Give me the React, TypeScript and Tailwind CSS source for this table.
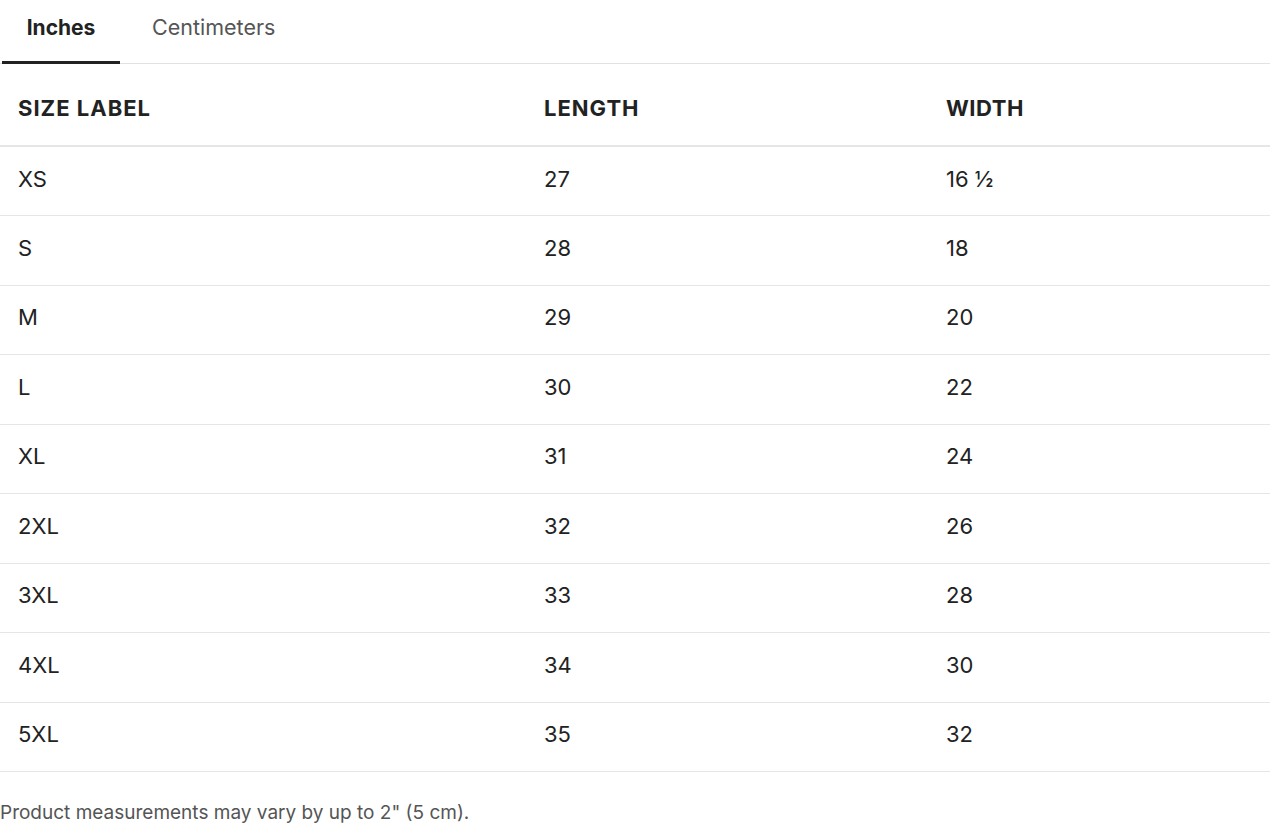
import { useState } from "react";

const rows = [
  ["XS", "27", "16 ½"],
  ["S", "28", "18"],
  ["M", "29", "20"],
  ["L", "30", "22"],
  ["XL", "31", "24"],
  ["2XL", "32", "26"],
  ["3XL", "33", "28"],
  ["4XL", "34", "30"],
  ["5XL", "35", "32"],
];

export default function App() {
  const [tab, setTab] = useState("in");

  return (
    <div className="w-[1270px] bg-white text-[#222] font-['Inter','Liberation_Sans',sans-serif]">
      {/* Tabs */}
      <div className="flex h-[64px] border-b border-[#e2e2e2]">
        <button
          onClick={() => setTab("in")}
          className={`relative ml-[2px] w-[118px] h-full pb-[8px] text-[21px] ${tab === "in" ? "font-bold text-[#222]" : "text-[#555]"}`}
        >
          Inches
          {tab === "in" && <span className="absolute left-0 right-0 -bottom-px h-[3px] bg-[#222]" />}
        </button>
        <button
          onClick={() => setTab("cm")}
          className={`relative ml-[8px] px-[24px] h-full pb-[8px] text-[21.5px] ${tab === "cm" ? "font-bold text-[#222]" : "text-[#555]"}`}
        >
          Centimeters
          {tab === "cm" && <span className="absolute left-0 right-0 -bottom-px h-[3px] bg-[#222]" />}
        </button>
      </div>

      <table className="w-full table-fixed border-collapse">
        <colgroup>
          <col className="w-[526px]" />
          <col className="w-[402px]" />
          <col />
        </colgroup>
        <thead>
          <tr className="h-[82px] border-b-2 border-[#e6e6e6]">
            <th className="pl-[18px] pt-[8px] text-left text-[22px] font-bold tracking-[1px]">SIZE LABEL</th>
            <th className="pl-[18px] pt-[8px] text-left text-[22px] font-bold tracking-[1px]">LENGTH</th>
            <th className="pl-[18px] pt-[8px] text-left text-[22px] font-bold tracking-[0.5px]">WIDTH</th>
          </tr>
        </thead>
        <tbody>
          {rows.map((r) => (
            <tr key={r[0]} className="h-[69.5px] border-b border-[#e6e6e6]">
              {r.map((c, i) => (
                <td key={i} className="pl-[18px] pb-[4px] text-[22px]">
                  {c}
                </td>
              ))}
            </tr>
          ))}
        </tbody>
      </table>

      <p className="pt-[27px] text-[19px] text-[#555]">Product measurements may vary by up to 2" (5 cm).</p>
    </div>
  );
}
